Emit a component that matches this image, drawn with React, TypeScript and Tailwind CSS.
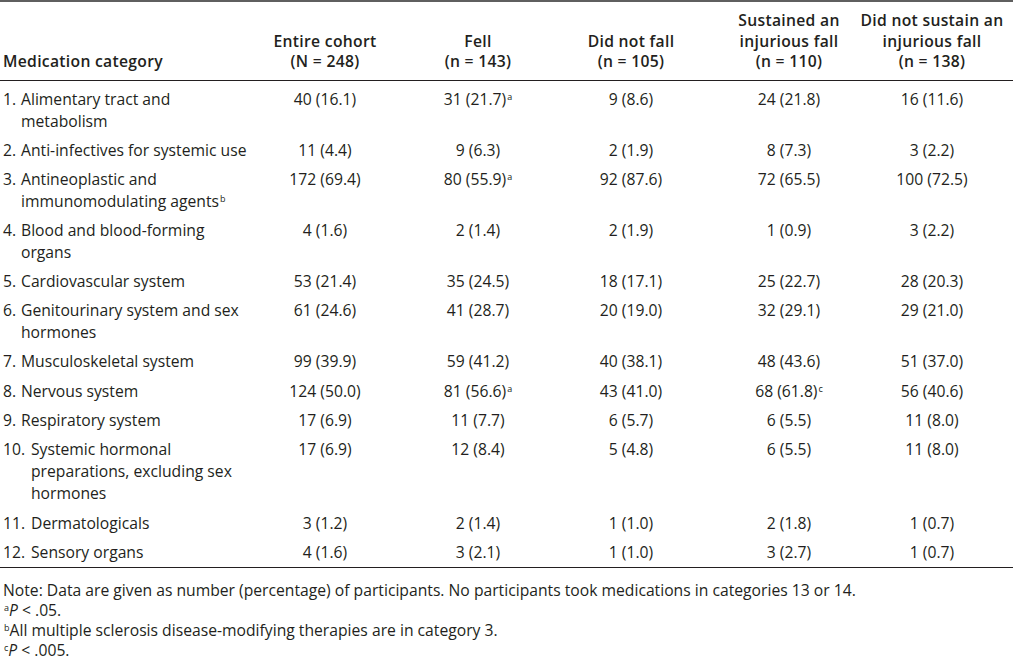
import React from "react";

type Row = {
  n: string;
  label: string[];
  sup?: string;
  cells: string[];
  pad: string;
};

const rows: Row[] = [
  { n: "1.", label: ["Alimentary tract and", "metabolism"], cells: ["40 (16.1)", "31 (21.7)|a", "9 (8.6)", "24 (21.8)", "16 (11.6)"], pad: "pt-[7px] pb-[4px]" },
  { n: "2.", label: ["Anti-infectives for systemic use"], cells: ["11 (4.4)", "9 (6.3)", "2 (1.9)", "8 (7.3)", "3 (2.2)"], pad: "pt-[3px] pb-[4px]" },
  { n: "3.", label: ["Antineoplastic and", "immunomodulating agents"], sup: "b", cells: ["172 (69.4)", "80 (55.9)|a", "92 (87.6)", "72 (65.5)", "100 (72.5)"], pad: "pt-[3px] pb-[4px]" },
  { n: "4.", label: ["Blood and blood-forming", "organs"], cells: ["4 (1.6)", "2 (1.4)", "2 (1.9)", "1 (0.9)", "3 (2.2)"], pad: "pt-[3px] pb-[4px]" },
  { n: "5.", label: ["Cardiovascular system"], cells: ["53 (21.4)", "35 (24.5)", "18 (17.1)", "25 (22.7)", "28 (20.3)"], pad: "pt-[3px] pb-[4px]" },
  { n: "6.", label: ["Genitourinary system and sex", "hormones"], cells: ["61 (24.6)", "41 (28.7)", "20 (19.0)", "32 (29.1)", "29 (21.0)"], pad: "pt-[3px] pb-[4px]" },
  { n: "7.", label: ["Musculoskeletal system"], cells: ["99 (39.9)", "59 (41.2)", "40 (38.1)", "48 (43.6)", "51 (37.0)"], pad: "pt-[3px] pb-[4px]" },
  { n: "8.", label: ["Nervous system"], cells: ["124 (50.0)", "81 (56.6)|a", "43 (41.0)", "68 (61.8)|c", "56 (40.6)"], pad: "pt-[4px] pb-[4px]" },
  { n: "9.", label: ["Respiratory system"], cells: ["17 (6.9)", "11 (7.7)", "6 (5.7)", "6 (5.5)", "11 (8.0)"], pad: "pt-[3px] pb-[4px]" },
  { n: "10.", label: ["Systemic hormonal", "preparations, excluding sex", "hormones"], cells: ["17 (6.9)", "12 (8.4)", "5 (4.8)", "6 (5.5)", "11 (8.0)"], pad: "pt-[3px] pb-[4px]" },
  { n: "11.", label: ["Dermatologicals"], cells: ["3 (1.2)", "2 (1.4)", "1 (1.0)", "2 (1.8)", "1 (0.7)"], pad: "pt-[4px] pb-[4px]" },
  { n: "12.", label: ["Sensory organs"], cells: ["4 (1.6)", "3 (2.1)", "1 (1.0)", "3 (2.7)", "1 (0.7)"], pad: "pt-[3px] pb-[4px]" },
];

const grid = "grid grid-cols-[249px_152px_154px_152px_164px_122px]";

const Sup = ({ children }: { children: React.ReactNode }) => (
  <span className="relative -top-[5px] ml-[1px] text-[9px] leading-none">{children}</span>
);

const Cell = ({ value }: { value: string }) => {
  const [v, s] = value.split("|");
  return (
    <div className="whitespace-nowrap text-center">
      {v}
      {s && <Sup>{s}</Sup>}
    </div>
  );
};

export default function App() {
  return (
    <div
      className="w-[1013px] bg-white text-[15.7px] leading-[22px] text-[#231f20]"
      style={{ fontFamily: "'Open Sans', 'Liberation Sans', sans-serif" }}
    >
      <div className="border-t-[2px] border-[#5f5f5f]">
        {/* header */}
        <div className={`${grid} border-b-[1.5px] border-[#231f20] pt-[8px] pb-[8px] font-semibold tracking-[0.3px] leading-[20.5px]`}>
          <div className="flex items-end pl-[3px]">Medication category</div>
          <div className="flex items-end justify-center text-center">
            Entire cohort
            <br />
            (N = 248)
          </div>
          <div className="flex items-end justify-center text-center">
            Fell
            <br />
            (n = 143)
          </div>
          <div className="flex items-end justify-center text-center">
            Did not fall
            <br />
            (n = 105)
          </div>
          <div className="flex items-end justify-center text-center">
            Sustained an
            <br />
            injurious fall
            <br />
            (n = 110)
          </div>
          <div className="flex items-end justify-center whitespace-nowrap text-center">
            Did not sustain an
            <br />
            injurious fall
            <br />
            (n = 138)
          </div>
        </div>

        {/* body */}
        <div className="border-b-[1.5px] border-[#231f20]">
          {rows.map((r) => (
            <div key={r.n} className={`${grid} ${r.pad}`}>
              <div className="flex pl-[3px]">
                <span className={r.n.length > 2 ? "w-[28px] shrink-0" : "w-[18px] shrink-0"}>{r.n}</span>
                <div>
                  {r.label.map((l, i) => (
                    <div key={i} className="whitespace-nowrap">
                      {l}
                      {r.sup && i === r.label.length - 1 && <Sup>{r.sup}</Sup>}
                    </div>
                  ))}
                </div>
              </div>
              {r.cells.map((c, i) => (
                <Cell key={i} value={c} />
              ))}
            </div>
          ))}
        </div>

        {/* notes */}
        <div className="pt-[12px] pl-[3px] leading-[20px]">
          <p>
            Note: Data are given as number (percentage) of participants. No participants took medications in
            categories 13 or 14.
          </p>
          <p>
            <Sup>a</Sup>
            <span className="italic">P</span> &lt; .05.
          </p>
          <p>
            <Sup>b</Sup>All multiple sclerosis disease-modifying therapies are in category 3.
          </p>
          <p>
            <Sup>c</Sup>
            <span className="italic">P</span> &lt; .005.
          </p>
        </div>
      </div>
    </div>
  );
}
